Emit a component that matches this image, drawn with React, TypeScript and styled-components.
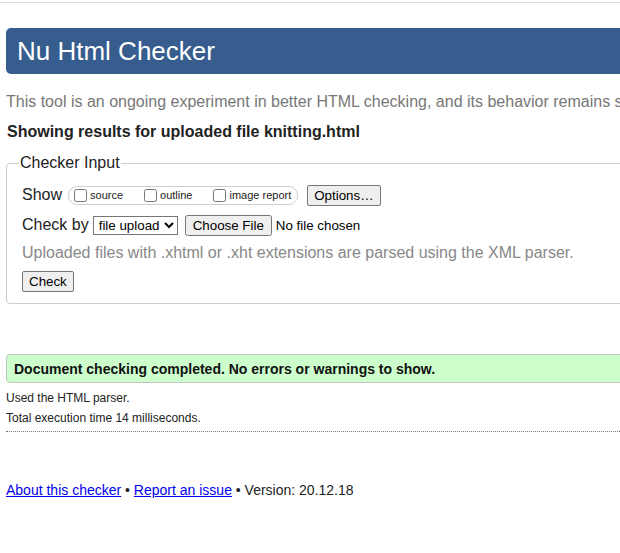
import React from "react";
import styled, { createGlobalStyle } from "styled-components";

const Global = createGlobalStyle`
  html, body { margin: 0; padding: 0; overflow: hidden; background: #fff; }
  body { font-family: "Liberation Sans", Arial, sans-serif; color: #222; }
`;

const Page = styled.div`
  width: 1100px;
`;

const TopRule = styled.div`
  margin-top: 2px;
  border-top: 1px solid #dcdcdc;
`;

const Title = styled.h1`
  margin: 25px 0 0 6px;
  height: 46px;
  padding-left: 11px;
  background: #365d8e;
  border-radius: 5px;
  color: #fff;
  font-size: 26px;
  font-weight: normal;
  line-height: 46px;
`;

const Intro = styled.p`
  margin: 19px 0 0 6px;
  font-size: 16px;
  line-height: 18px;
  color: #777;
  white-space: nowrap;
`;

const Showing = styled.h2`
  margin: 12px 0 0 7px;
  font-size: 16px;
  line-height: 18px;
  font-weight: bold;
  color: #222;
`;

const Fieldset = styled.fieldset`
  margin: 13px 0 0 6px;
  padding: 12px 15px 11px 15px;
  border: 1px solid #ccc;
  border-radius: 4px;
`;

const Legend = styled.legend`
  margin-left: -3px;
  padding: 0 1px;
  font-size: 16px;
  line-height: 18px;
  color: #222;
`;

const Row = styled.div<{ $mt?: number }>`
  display: flex;
  align-items: center;
  height: 22px;
  margin-top: ${(p) => p.$mt ?? 0}px;
  font-size: 16px;
  color: #222;
`;

const Label = styled.span`
  font-size: 16px;
  margin-right: 4px;
`;

const Pill = styled.span`
  display: inline-flex;
  align-items: center;
  height: 17px;
  margin-left: 2px;
  padding: 0 6px 0 1px;
  border: 1px solid #cfcfcf;
  border-radius: 9px;
`;

const CheckOption = styled.label<{ $last?: boolean }>`
  display: inline-flex;
  align-items: center;
  font-size: 11px;
  margin-right: ${(p) => (p.$last ? 0 : 17)}px;
`;

const Box = styled.input`
  width: 13px;
  height: 13px;
  margin: 0 3px 0 4px;
`;

const Button = styled.button<{ $ml?: number }>`
  margin-left: ${(p) => p.$ml ?? 0}px;
  height: 21px;
  padding: 0 6px;
  font-family: "Liberation Sans", Arial, sans-serif;
  font-size: 13.33px;
  color: #000;
  background: #efefef;
  border: 1px solid #767676;
  border-radius: 2px;
`;

const Select = styled.select`
  height: 19px;
  font-family: "Liberation Sans", Arial, sans-serif;
  font-size: 13.33px;
  color: #000;
  background: #fff;
  border: 1px solid #767676;
  border-radius: 0;
  padding: 0 1px;
`;

const FileInput = styled.input`
  margin-left: 7px;
  font-family: "Liberation Sans", Arial, sans-serif;
  font-size: 13.33px;
  color: #000;
`;

const Note = styled.p`
  margin: 8px 0 0 0;
  font-size: 16px;
  line-height: 18px;
  color: #888;
  white-space: nowrap;
`;

const Success = styled.div`
  margin: 50px 0 0 6px;
  height: 27px;
  padding-left: 7px;
  display: flex;
  align-items: center;
  background: #ccffcc;
  border: 1px solid #c4c4c4;
  border-radius: 4px;
  font-size: 14px;
  font-weight: bold;
  color: #111;
`;

const Details = styled.div`
  margin-left: 6px;
  padding-top: 2px;
  padding-bottom: 6px;
  border-bottom: 1px dotted #777;
`;

const Detail = styled.p`
  margin: 6px 0 0 0;
  font-size: 12px;
  line-height: 14px;
  color: #222;
`;

const Footer = styled.p`
  margin: 50px 0 0 6px;
  font-size: 14px;
  line-height: 16px;
  color: #222;
`;

const Link = styled.a`
  color: #0000ee;
  text-decoration: underline;
`;

export default function App() {
  return (
    <Page>
      <Global />
      <TopRule />
      <Title>Nu Html Checker</Title>
      <Intro>
        This tool is an ongoing experiment in better HTML checking, and its behavior remains subject to change
      </Intro>
      <Showing>Showing results for uploaded file knitting.html</Showing>
      <Fieldset>
        <Legend>Checker Input</Legend>
        <Row>
          <Label>Show</Label>
          <Pill>
            <CheckOption>
              <Box type="checkbox" />
              source
            </CheckOption>
            <CheckOption>
              <Box type="checkbox" />
              outline
            </CheckOption>
            <CheckOption $last>
              <Box type="checkbox" />
              image report
            </CheckOption>
          </Pill>
          <Button $ml={9}>Options…</Button>
        </Row>
        <Row $mt={8}>
          <Label>Check by</Label>
          <Select defaultValue="file">
            <option value="address">address</option>
            <option value="file">file upload</option>
            <option value="text">text input</option>
          </Select>
          <FileInput type="file" />
        </Row>
        <Note>Uploaded files with .xhtml or .xht extensions are parsed using the XML parser.</Note>
        <Row $mt={8}>
          <Button>Check</Button>
        </Row>
      </Fieldset>
      <Success>Document checking completed. No errors or warnings to show.</Success>
      <Details>
        <Detail>Used the HTML parser.</Detail>
        <Detail>Total execution time 14 milliseconds.</Detail>
      </Details>
      <Footer>
        <Link href="#about">About this checker</Link> • <Link href="#issue">Report an issue</Link> • Version: 20.12.18
      </Footer>
    </Page>
  );
}
